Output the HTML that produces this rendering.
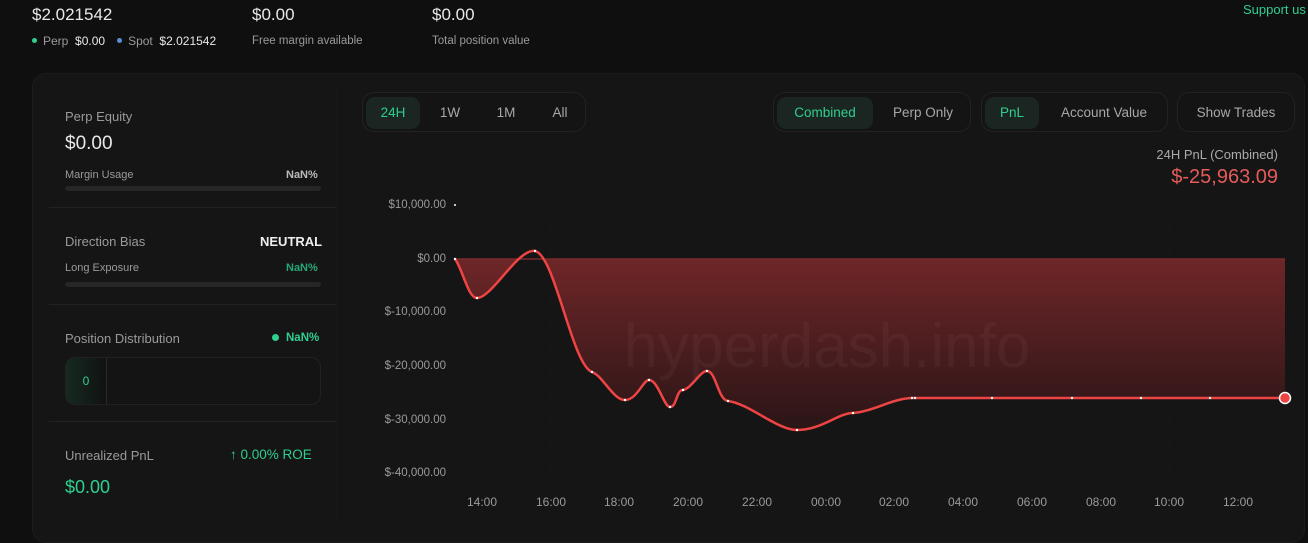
<!DOCTYPE html>
<html><head><meta charset="utf-8"><style>
*{margin:0;padding:0;box-sizing:border-box}
body{width:1308px;height:521px;overflow:hidden;background:#0f0f0f;font-family:"Liberation Sans",sans-serif;color:#e8e8e8;position:relative}
.a{position:absolute;white-space:nowrap}
.g{color:#2fcf8f}
.m{color:#9a9a9a}
.card{position:absolute;left:32px;top:73px;width:1273px;height:470px;background:#151515;border:1px solid #1c1c1c;border-radius:14px}
.hr{position:absolute;left:49px;width:287px;height:1px;background:#222}
.bar{position:absolute;left:65px;width:256px;height:5px;border-radius:3px;background:#262626}
.grp{position:absolute;top:92px;height:40px;border:1px solid #222;border-radius:12px;background:#141414}
.btn{position:absolute;top:4px;height:32px;line-height:32px;font-size:13.5px;color:#a8a8a8;text-align:center;border-radius:9px}
.on{background:#1b2622;color:#2fcf8f}
.yl{position:absolute;right:862px;font-size:11.5px;color:#9a9a9a}
.xl{position:absolute;top:495px;font-size:12px;color:#9a9a9a;transform:translateX(-50%)}
</style></head><body>
<div class="a" style="left:32px;top:5px;font-size:17px">$2.021542</div>
<div class="a" style="left:32px;top:34px;font-size:12px"><span style="display:inline-block;width:5px;height:5px;border-radius:3px;background:#2fcf8f;margin-right:6px;vertical-align:2px"></span><span class="m">Perp</span>&nbsp; $0.00 &nbsp; <span style="display:inline-block;width:5px;height:5px;border-radius:3px;background:#5b8fd6;margin:0 6px 0 2px;vertical-align:2px"></span><span class="m">Spot</span>&nbsp; $2.021542</div>
<div class="a" style="left:252px;top:5px;font-size:17px">$0.00</div>
<div class="a m" style="left:252px;top:35px;font-size:11.5px">Free margin available</div>
<div class="a" style="left:432px;top:5px;font-size:17px">$0.00</div>
<div class="a m" style="left:432px;top:35px;font-size:11.5px">Total position value</div>
<div class="a g" style="left:1243px;top:2px;font-size:13px">Support us</div>

<div class="card"></div>
<div style="position:absolute;left:336px;top:90px;width:1px;height:431px;background:#181818"></div>
<div class="a m" style="left:65px;top:109px;font-size:13px">Perp Equity</div>
<div class="a" style="left:65px;top:133px;font-size:19px">$0.00</div>
<div class="a m" style="left:65px;top:169px;font-size:11px">Margin Usage</div>
<div class="a" style="left:286px;top:169px;font-size:11px;color:#bbb;font-weight:bold">NaN%</div>
<div class="bar" style="top:186px"></div>
<div class="hr" style="top:207px"></div>
<div class="a m" style="left:65px;top:234px;font-size:13px">Direction Bias</div>
<div class="a" style="left:260px;top:234px;font-size:13px;font-weight:bold;color:#eee">NEUTRAL</div>
<div class="a m" style="left:65px;top:262px;font-size:11px">Long Exposure</div>
<div class="a g" style="left:286px;top:262px;font-size:11px;font-weight:bold;color:#26a877">NaN%</div>
<div class="bar" style="top:282px"></div>
<div class="hr" style="top:304px"></div>
<div class="a m" style="left:65px;top:331px;font-size:13px">Position Distribution</div>
<div class="a g" style="left:272px;top:332px;font-size:11.5px;font-weight:bold"><span style="display:inline-block;width:7px;height:7px;border-radius:4px;background:#2fcf8f;margin-right:7px;vertical-align:0"></span>NaN%</div>
<div style="position:absolute;left:65px;top:357px;width:256px;height:48px;border:1px solid #222;border-radius:10px;overflow:hidden;background:#141414">
<div style="position:absolute;left:0;top:0;width:41px;height:48px;background:linear-gradient(90deg,#152a20,#111);border-right:1px solid #2a2a2a;color:#2fcf8f;font-size:12px;line-height:46px;text-align:center">0</div></div>
<div class="hr" style="top:421px"></div>
<div class="a m" style="left:65px;top:448px;font-size:13px">Unrealized PnL</div>
<div class="a g" style="left:230px;top:447px;font-size:13.5px">↑ 0.00% ROE</div>
<div class="a g" style="left:65px;top:477px;font-size:18px">$0.00</div>

<div class="grp" style="left:362px;width:224px">
<div class="btn on" style="left:3px;width:54px">24H</div>
<div class="btn" style="left:62px;width:50px">1W</div>
<div class="btn" style="left:118px;width:50px">1M</div>
<div class="btn" style="left:172px;width:50px">All</div></div>
<div class="grp" style="left:773px;width:198px">
<div class="btn on" style="left:3px;width:96px">Combined</div>
<div class="btn" style="left:102px;width:94px">Perp Only</div></div>
<div class="grp" style="left:981px;width:187px">
<div class="btn on" style="left:3px;width:54px">PnL</div>
<div class="btn" style="left:62px;width:120px">Account Value</div></div>
<div class="grp" style="left:1177px;width:118px">
<div class="btn" style="left:2px;width:112px">Show Trades</div></div>

<div class="a" style="right:30px;top:147px;font-size:13px;color:#aaa">24H PnL (Combined)</div>
<div class="a" style="right:30px;top:166px;font-size:20px;color:#e55b5b">$-25,963.09</div>

<div class="yl" style="top:199px">$10,000.00</div>
<div class="yl" style="top:253px">$0.00</div>
<div class="yl" style="top:306px">$-10,000.00</div>
<div class="yl" style="top:360px">$-20,000.00</div>
<div class="yl" style="top:414px">$-30,000.00</div>
<div class="yl" style="top:467px">$-40,000.00</div>
<div class="xl" style="left:482px">14:00</div><div class="xl" style="left:551px">16:00</div><div class="xl" style="left:619px">18:00</div><div class="xl" style="left:688px">20:00</div><div class="xl" style="left:757px">22:00</div><div class="xl" style="left:826px">00:00</div><div class="xl" style="left:894px">02:00</div><div class="xl" style="left:963px">04:00</div><div class="xl" style="left:1032px">06:00</div><div class="xl" style="left:1101px">08:00</div><div class="xl" style="left:1169px">10:00</div><div class="xl" style="left:1238px">12:00</div>

<svg style="position:absolute;left:0;top:0" width="1308" height="521">
<defs><linearGradient id="f" x1="0" y1="259" x2="0" y2="430" gradientUnits="userSpaceOnUse"><stop offset="0" stop-color="#6e2628"/><stop offset="1" stop-color="#2a1516"/></linearGradient>
<clipPath id="c"><rect x="455" y="259" width="830" height="200"/></clipPath></defs>
<g stroke="#191919" stroke-dasharray="3 3"><line x1="482" y1="205" x2="482" y2="478"/><line x1="551" y1="205" x2="551" y2="478"/><line x1="619" y1="205" x2="619" y2="478"/><line x1="688" y1="205" x2="688" y2="478"/><line x1="757" y1="205" x2="757" y2="478"/><line x1="826" y1="205" x2="826" y2="478"/><line x1="894" y1="205" x2="894" y2="478"/><line x1="963" y1="205" x2="963" y2="478"/><line x1="1032" y1="205" x2="1032" y2="478"/><line x1="1101" y1="205" x2="1101" y2="478"/><line x1="1169" y1="205" x2="1169" y2="478"/><line x1="1238" y1="205" x2="1238" y2="478"/></g>
<path clip-path="url(#c)" fill="url(#f)" d="M455,259 C463,270 468,298 477,298 C492,298 518,248 535,251 C555,255 572,365 592,372 C603,376 613,400 625,400 C637,400 643,380 649,380 C658,380 664,407 670,407 C677,407 676,390 683,390 C692,388 700,371 707,371 C716,371 718,400 728,401 C750,404 777,430 797,430 C822,430 838,413 853,413 C875,411 893,398 913,398 L1285,398 L1285,259 Z"/>
<text x="827" y="367" font-family="Liberation Sans" font-size="62" fill="#ffffff" fill-opacity="0.04" text-anchor="middle">hyperdash.info</text>
<line x1="455" y1="259" x2="1285" y2="259" stroke="#7a2a2c" stroke-width="1.5"/>
<path fill="none" stroke="#ef4444" stroke-width="2.5" d="M455,259 C463,270 468,298 477,298 C492,298 518,248 535,251 C555,255 572,365 592,372 C603,376 613,400 625,400 C637,400 643,380 649,380 C658,380 664,407 670,407 C677,407 676,390 683,390 C692,388 700,371 707,371 C716,371 718,400 728,401 C750,404 777,430 797,430 C822,430 838,413 853,413 C875,411 893,398 913,398 L1285,398"/>
<g fill="#fff"><circle cx="455" cy="205" r="1"/><circle cx="455" cy="259" r="1.2"/><circle cx="477" cy="298" r="1.2"/><circle cx="535" cy="251" r="1.2"/><circle cx="592" cy="372" r="1.2"/><circle cx="625" cy="400" r="1.2"/><circle cx="649" cy="380" r="1.2"/><circle cx="670" cy="407" r="1.2"/><circle cx="683" cy="390" r="1.2"/><circle cx="707" cy="371" r="1.2"/><circle cx="728" cy="401" r="1.2"/><circle cx="797" cy="430" r="1.2"/><circle cx="853" cy="413" r="1.2"/><circle cx="912" cy="398" r="1.2"/><circle cx="915" cy="398" r="1.2"/><circle cx="992" cy="398" r="1.2"/><circle cx="1072" cy="398" r="1.2"/><circle cx="1141" cy="398" r="1.2"/><circle cx="1210" cy="398" r="1.2"/></g>
<circle cx="1285" cy="398" r="5.5" fill="#ef4444" stroke="#fff" stroke-width="1.5"/>
</svg>
</body></html>
